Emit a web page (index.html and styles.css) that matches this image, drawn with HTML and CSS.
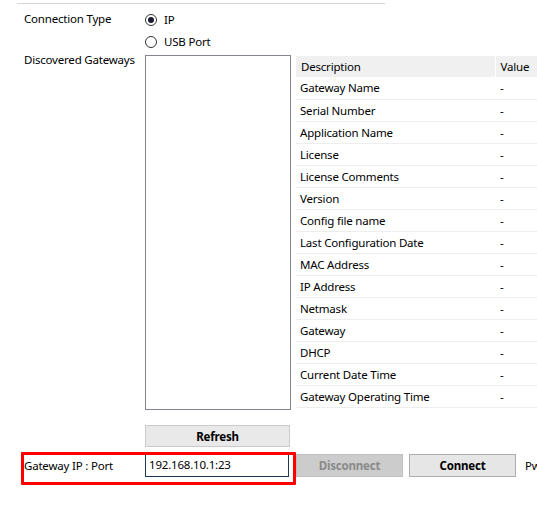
FILE: index.html
```html
<!DOCTYPE html>
<html>
<head>
<meta charset="utf-8">
<link rel="stylesheet" href="styles.css">
</head>
<body>
<div class="topline"></div>
<div class="main">
  <div class="label conn">Connection Type</div>
  <div class="radios">
    <div class="radio"><span class="circle checked"></span>IP</div>
    <div class="radio"><span class="circle"></span>USB Port</div>
  </div>
  <div class="label disc">Discovered Gateways</div>
  <div class="listcol">
    <div class="listbox"></div>
    <button class="btn refresh">Refresh</button>
  </div>
  <div class="tablewrap">
    <table class="grid">
      <thead>
        <tr><th class="c1">Description</th><th class="c2">Value</th></tr>
      </thead>
      <tbody>
        <tr><td>Gateway Name</td><td>-</td></tr>
        <tr><td>Serial Number</td><td>-</td></tr>
        <tr><td>Application Name</td><td>-</td></tr>
        <tr><td>License</td><td>-</td></tr>
        <tr><td>License Comments</td><td>-</td></tr>
        <tr><td>Version</td><td>-</td></tr>
        <tr><td>Config file name</td><td>-</td></tr>
        <tr><td>Last Configuration Date</td><td>-</td></tr>
        <tr><td>MAC Address</td><td>-</td></tr>
        <tr><td>IP Address</td><td>-</td></tr>
        <tr><td>Netmask</td><td>-</td></tr>
        <tr><td>Gateway</td><td>-</td></tr>
        <tr><td>DHCP</td><td>-</td></tr>
        <tr><td>Current Date Time</td><td>-</td></tr>
        <tr><td>Gateway Operating Time</td><td>-</td></tr>
      </tbody>
    </table>
  </div>
</div>
<div class="bottom">
  <div class="label ip">Gateway IP : Port</div>
  <div class="input">192.168.10.1:23</div>
  <button class="btn disconnect">Disconnect</button>
  <button class="btn connect">Connect</button>
  <span class="pw">Pw</span>
  <div class="redbox"></div>
</div>
</body>
</html>
```
FILE: styles.css
```css
* { box-sizing: border-box; }
html, body { margin: 0; padding: 0; }
body {
  width: 537px;
  height: 526px;
  overflow: hidden;
  background: #fff;
  color: #000;
  font-family: "Noto Sans", "Segoe UI", sans-serif;
  font-size: 11.5px;
  letter-spacing: -0.2px;
}
.topline {
  margin: 3px 0 0 17px;
  width: 368px;
  height: 1px;
  background: #d6d6d6;
}
.main {
  display: grid;
  grid-template-columns: 121px 146px 1fr;
  padding-left: 24px;
  margin-top: 5px;
}
.label { white-space: nowrap; }
.conn { line-height: 22px; margin-top: -1px; }
.radios {
  grid-column: 2 / span 2;
  display: flex;
  flex-direction: column;
}
.radio {
  height: 22px;
  display: flex;
  align-items: center;
  line-height: 16px;
}
.circle {
  width: 12px;
  height: 12px;
  border: 1px solid #333;
  border-radius: 50%;
  margin-right: 7px;
  position: relative;
  flex: none;
}
.circle.checked::after {
  content: "";
  position: absolute;
  left: 2px; top: 2px;
  width: 6px; height: 6px;
  border-radius: 50%;
  background: #1a1a2e;
}
.disc { line-height: 16px; margin-top: -1px; }
.listcol { display: flex; flex-direction: column; padding-top: 2px; }
.listbox {
  height: 355px;
  border: 1px solid #828790;
  background: #fff;
}
.btn {
  font-family: inherit;
  font-size: 11.5px;
  letter-spacing: -0.2px;
  font-weight: bold;
  padding: 0;
  height: 23px;
  border-radius: 0;
  flex: none;
}
.refresh {
  margin-top: 15px;
  width: 145px;
  height: 22px;
  background: #e9e9e9;
  border: 1px solid #cbcbcb;
  color: #000;
}
.tablewrap {
  margin-left: 5px;
  padding-top: 3px;
  width: 260px;
}
.grid {
  border-collapse: collapse;
  width: 260px;
  table-layout: fixed;
}
.grid th {
  background: #f0f0f0;
  font-weight: normal;
  text-align: left;
  height: 21px;
  padding: 0 0 0 5px;
  line-height: 16px;
}
.grid th.c1 { width: 199px; border-right: 1px solid #fff; }
.grid td {
  height: 22px;
  padding: 1px 0 0 4px;
  border-bottom: 1px solid #eeeeee;
  line-height: 16px;
  white-space: nowrap;
}
.grid td + td { padding-left: 5px; }
.bottom {
  position: relative;
  display: flex;
  align-items: center;
  height: 23px;
  margin-top: 7px;
  padding-left: 24px;
}
.ip { width: 121px; flex: none; }
.input {
  flex: none;
  width: 144px;
  height: 23px;
  border: 1px solid #1d3a55;
  padding: 0 3px;
  line-height: 20px;
  font-size: 11.5px;
}
.disconnect {
  margin-left: 7px;
  width: 107px;
  background: #cccccc;
  border: 1px solid #bfbfbf;
  color: #8a8a8a;
}
.connect {
  margin-left: 6px;
  width: 107px;
  background: #e6e6e6;
  border: 1px solid #adadad;
  color: #000;
}
.pw { margin-left: 9px; flex: none; }
.redbox {
  position: absolute;
  left: 21px;
  top: -2px;
  width: 275px;
  height: 33px;
  border: 3px solid #ff0000;
  border-radius: 1px;
  pointer-events: none;
}
```
